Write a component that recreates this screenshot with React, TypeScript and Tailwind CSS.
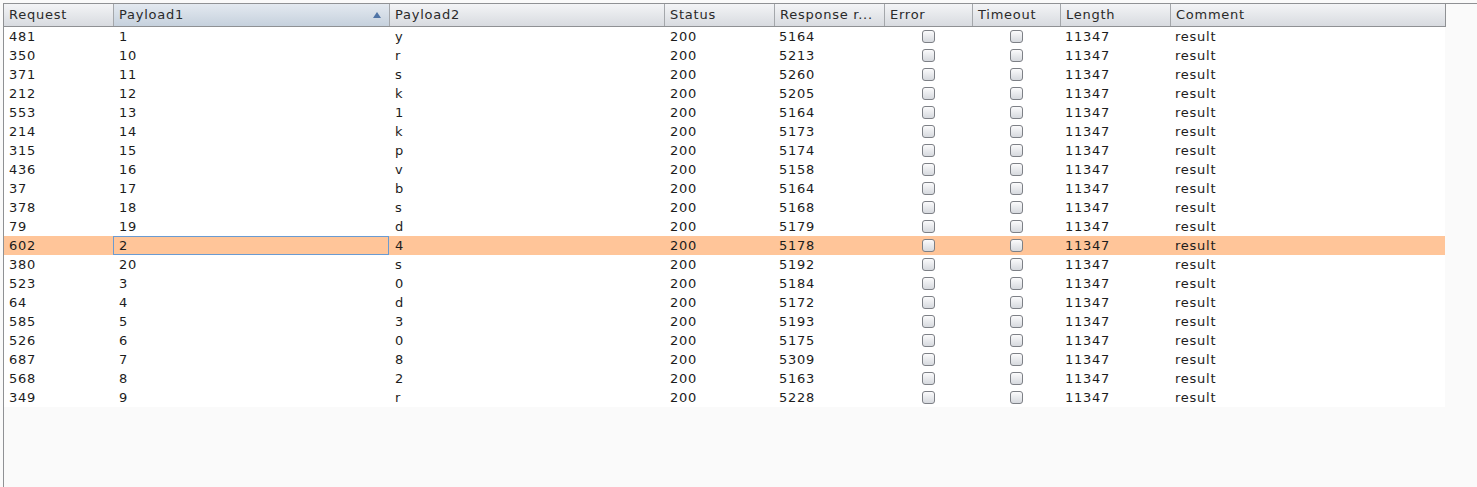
import React from "react";

const cols = [
  { name: "Request", w: "w-[109px]" },
  { name: "Payload1", w: "w-[276px]" },
  { name: "Payload2", w: "w-[275px]" },
  { name: "Status", w: "w-[110px]" },
  { name: "Response r...", w: "w-[110px]" },
  { name: "Error", w: "w-[88px]" },
  { name: "Timeout", w: "w-[88px]" },
  { name: "Length", w: "w-[110px]" },
  { name: "Comment", w: "w-[275px]" },
];

const rows: [string, string, string, string][] = [
  ["481", "1", "y", "5164"],
  ["350", "10", "r", "5213"],
  ["371", "11", "s", "5260"],
  ["212", "12", "k", "5205"],
  ["553", "13", "1", "5164"],
  ["214", "14", "k", "5173"],
  ["315", "15", "p", "5174"],
  ["436", "16", "v", "5158"],
  ["37", "17", "b", "5164"],
  ["378", "18", "s", "5168"],
  ["79", "19", "d", "5179"],
  ["602", "2", "4", "5178"],
  ["380", "20", "s", "5192"],
  ["523", "3", "0", "5184"],
  ["64", "4", "d", "5172"],
  ["585", "5", "3", "5193"],
  ["526", "6", "0", "5175"],
  ["687", "7", "8", "5309"],
  ["568", "8", "2", "5163"],
  ["349", "9", "r", "5228"],
];

function Check() {
  return (
    <span className="block w-[13px] h-[13px] rounded-[3px] border border-[#7d8086] bg-linear-to-b from-[#fbfbfc] to-[#d6d9de]" />
  );
}

export default function App() {
  return (
    <div
      className="w-[1477px] h-[487px] bg-[#fafafa] overflow-hidden pt-[3px] pl-[3px] text-[13px] tracking-[0.75px] text-[#1c1c1c]"
      style={{ fontFamily: '"DejaVu Sans", sans-serif' }}
    >
      <div className="h-full border-l border-t border-[#8f9194]">
        <div className="flex h-[23px] w-[1442px] border-b border-r border-[#8f9194]">
          {cols.map((c, i) => (
            <div
              key={c.name}
              className={`${c.w} ${
                i === 0 ? "" : "border-l border-[#a4a7ab]"
              } ${
                i === 1
                  ? "bg-linear-to-b from-[#e3e9f0] to-[#c6d1dd]"
                  : "bg-linear-to-b from-[#f3f4f6] to-[#d8dbe0]"
              } flex items-center pl-[5px] pr-[8px] pb-[2px] text-[#2a2a2a] leading-none`}
            >
              <span className="flex-1 whitespace-nowrap">{c.name}</span>
              {i === 1 && (
                <svg width="8" height="6" viewBox="0 0 8 6" className="mt-[1px]">
                  <path d="M4 0 L8 6 L0 6 Z" fill="#4f74a6" />
                </svg>
              )}
            </div>
          ))}
        </div>
        {rows.map((r, idx) => {
          const sel = idx === 11;
          return (
            <div
              key={idx}
              className={`flex h-[19px] w-[1441px] ${sel ? "bg-[#ffc599]" : "bg-white"}`}
            >
              <div className="w-[109px] pl-[5px] flex items-center">{r[0]}</div>
              <div
                className={`w-[276px] flex items-center ${
                  sel ? "border border-[#6b9bd1] pl-[5px]" : "pl-[6px]"
                }`}
              >
                {r[1]}
              </div>
              <div className="w-[275px] pl-[6px] flex items-center">{r[2]}</div>
              <div className="w-[110px] pl-[6px] flex items-center">200</div>
              <div className="w-[110px] pl-[5px] flex items-center">{r[3]}</div>
              <div className="w-[88px] flex items-center justify-center">
                <Check />
              </div>
              <div className="w-[88px] flex items-center justify-center">
                <Check />
              </div>
              <div className="w-[110px] pl-[5px] flex items-center">11347</div>
              <div className="w-[275px] pl-[5px] flex items-center">result</div>
            </div>
          );
        })}
      </div>
    </div>
  );
}
